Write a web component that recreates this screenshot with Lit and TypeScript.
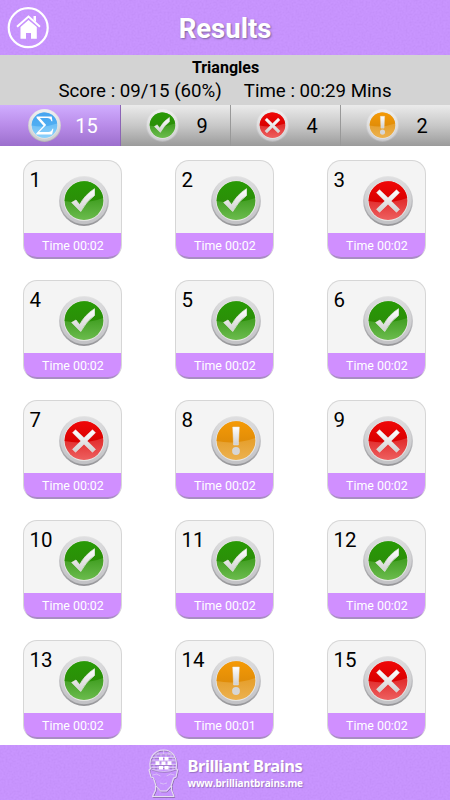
import { LitElement, html, css, svg } from "lit";
import { customElement, property } from "lit/decorators.js";
import { classMap } from "lit/directives/class-map.js";

type Kind = "all" | "right" | "wrong" | "skipped";

const tones: Record<Kind, string[]> = {
  all: ["#46a4f0", "#50aef2", "#6fc0f7", "#8fd2fb"],
  right: ["#289a06", "#2b8e08", "#45a126", "#6cbc4e"],
  wrong: ["#f00808", "#d80000", "#e23030", "#ee6060"],
  skipped: ["#f59a06", "#e08c08", "#e6a02e", "#ecb250"],
};

const glyphs: Record<Kind, unknown> = {
  all: svg`<path d="M13 11.500H36L37 18.500H35.500Q34 13.500 29 13.500H18L27.500 24.300L17 35H31Q35.500 35 37 30H38.500L36.500 38.500H12.500V37L23.500 25.500L13 13.500Z" fill="#fff"/>`,
  right: svg`<path d="M12.700 26.500L17 24L20.700 29Q25 19.500 35.500 12.700V19.500Q27 25.500 21.700 35.500Z" fill="url(#mark)" stroke="#e6e6e6" stroke-width=".8" stroke-linejoin="round"/>`,
  wrong: svg`<path d="M16.500 13.700L25 21.800L33.500 13.700L36.500 16.700L28.200 25L36.500 33.300L33.500 36.300L25 28.200L16.500 36.300L13.500 33.300L21.800 25L13.500 16.700Z" fill="url(#mark)" stroke="#e4e4e4" stroke-width=".6" stroke-linejoin="round"/>`,
  skipped: svg`<path d="M21.700 11H28.300L27.400 29H22.600Z" fill="url(#mark)" stroke="#e6e6e6" stroke-width=".5"/><circle cx="25" cy="35" r="3.900" fill="#d6d6d6"/>`,
};

@customElement("status-icon")
class StatusIcon extends LitElement {
  @property() kind: Kind = "right";
  static styles = css`
    :host { display: block; }
    svg { display: block; width: 100%; height: 100%; overflow: visible; }
    .rim-top { stop-color: var(--rim-top, #e4e4e4); }
    .rim-mid { stop-color: var(--rim-mid, #c0c0c3); }
    .rim-end { stop-color: var(--rim-end, #949497); }
    .ring-top { stop-color: var(--ring-top, #dedee0); }
    .ring-end { stop-color: var(--ring-end, #c2c2c5); }
  `;
  render() {
    const t = tones[this.kind];
    return html`<svg viewBox="0 0 50 50">
      <defs>
        <linearGradient id="rim" x1="0" y1="0" x2="0" y2="1">
          <stop class="rim-top" offset="0" /><stop class="rim-mid" offset=".5" /><stop class="rim-end" offset="1" />
        </linearGradient>
        <linearGradient id="ring" x1="0" y1="0" x2="0" y2="1">
          <stop class="ring-top" offset="0" /><stop class="ring-end" offset="1" />
        </linearGradient>
        <linearGradient id="top" x1="0" y1="0" x2="0" y2="1">
          <stop offset="0" stop-color=${t[0]} /><stop offset="1" stop-color=${t[1]} />
        </linearGradient>
        <linearGradient id="low" x1="0" y1="0" x2="0" y2="1">
          <stop offset=".5" stop-color=${t[2]} /><stop offset="1" stop-color=${t[3]} />
        </linearGradient>
        <linearGradient id="mark" x1="0" y1="0" x2="0" y2="1">
          <stop offset="0" stop-color="#fff" /><stop offset="1" stop-color="#d0d0d0" />
        </linearGradient>
      </defs>
      <circle cx="25" cy="25" r="24.900" fill="url(#rim)" />
      <circle cx="25" cy="24.600" r="23.600" fill="url(#ring)" />
      <circle cx="25" cy="24.700" r="20.300" fill="#e6e6e4" />
      <circle cx="25" cy="24.700" r="19.400" fill="url(#low)" />
      <path d="M5.600 25A19.400 19.400 0 0 1 44.200 22Q25 29 5.600 25Z" fill="url(#top)" />
      ${glyphs[this.kind]}
    </svg>`;
  }
}

@customElement("grain-layer")
class GrainLayer extends LitElement {
  static styles = css`
    :host { position: absolute; inset: 0; opacity: 0.05; }
    svg { display: block; width: 100%; height: 100%; }
  `;
  render() {
    return html`<svg>
      <filter id="grain" x="0" y="0" width="100%" height="100%"><feTurbulence type="fractalNoise" baseFrequency=".5" numOctaves="2" seed="4" /><feColorMatrix type="matrix" values="1.500 0 0 0 0  1.500 0 0 0 0  1.500 0 0 0 0  0 0 0 0 1" /></filter>
      <rect width="100%" height="100%" filter="url(#grain)" />
    </svg>`;
  }
}

@customElement("result-card")
class ResultCard extends LitElement {
  @property({ type: Number }) number = 1;
  @property() kind: Kind = "right";
  @property() time = "00:02";
  static styles = css`
    :host {
      display: flex; flex-direction: column; box-sizing: border-box; width: 99px; height: 99px;
      border: 1px solid #d6d6d6; border-bottom: 0; border-radius: 14px; overflow: hidden; background: #f4f4f4;
    }
    .body { display: flex; flex: 1; justify-content: space-between; padding: 7px 12.500px 0 5px; }
    .number { font-size: 20.500px; line-height: 24px; color: #000; }
    status-icon { width: 50px; height: 50px; margin-top: 8px; flex: none; }
    .time {
      height: 26px; box-sizing: border-box; margin: 0 -1px; border-bottom: 2px solid #a98cc4;
      border-radius: 0 0 14px 14px; background: #d08fff; color: #fff; font-size: 12.400px; line-height: 26px; text-align: center;
    }
  `;
  render() {
    return html`<div class="body"><span class="number">${this.number}</span><status-icon .kind=${this.kind}></status-icon></div>
      <div class="time">Time ${this.time}</div>`;
  }
}

@customElement("app-root")
class AppRoot extends LitElement {
  static styles = css`
    :host { display: flex; flex-direction: column; width: 450px; height: 800px; overflow: hidden; background: #fff; font-family: Roboto, sans-serif; color: #000; }
    header { position: relative; display: grid; grid-template-columns: 58px 1fr 58px; align-items: center; height: 55px; background: #c68fff; flex: none; }
    .home { width: 42px; height: 42px; margin-left: 7px; position: relative; }
    h1 { position: relative; margin: 0; padding-top: 2px; text-align: center; color: #fff; font-size: 27.500px; line-height: 34px; font-weight: 700; text-shadow: 1px 1px 2px #7b659a; }
    .summary { box-sizing: border-box; height: 50px; background: #d3d3d3; text-align: center; flex: none; }
    .topic { font-size: 16px; font-weight: 700; line-height: 25px; padding-left: 1px; }
    .score { display: flex; justify-content: center; gap: 22px; font-size: 18.700px; line-height: 23px; }
    nav {
      display: grid; grid-template-columns: 121px 110px 110px 109px; height: 41px; flex: none;
      --rim-top: #ececec; --rim-mid: #cfcfd0; --rim-end: #b4b4b6; --ring-top: #f0f0f0; --ring-end: #cdcdd0;
    }
    .tab { display: flex; align-items: center; box-sizing: border-box; padding-left: 25px; border-right: 1px solid #999; background: linear-gradient(#ebebeb, #c8c8c8 50%, #9b9b9b); font-size: 20px; }
    .tab:last-child { border: 0; }
    .tab status-icon { width: 33px; height: 33px; margin-top: -1px; }
    .tab .count { flex: 1; text-align: center; padding-right: 5px; }
    .tab.active { padding-left: 28px; color: #fff; background: linear-gradient(#d0adff, #b98ce9 50%, #9c6fcd); border-color: #8c65b5; }
    .tab.active .count { padding-right: 8px; }
    main { flex: 1; display: grid; grid-template-columns: repeat(3, 99px); grid-auto-rows: 99px; gap: 21px 53px; padding: 14px 0 0 23.400px; }
    footer { position: relative; display: flex; height: 55px; background: #c68fff; flex: none; color: #fff; font-family: "Open Sans", sans-serif; font-weight: 700; }
    .head { position: relative; width: 32px; height: 50px; margin: 3px 0 0 148px; overflow: visible; }
    .brand { position: relative; margin: 10px 0 0 7.500px; text-shadow: 1px 1px 1px #9871c4; white-space: nowrap; }
    .name { font-family: "Noto Sans", sans-serif; font-size: 16.500px; line-height: 22px; letter-spacing: -0.450px; }
    .site { font-size: 10px; line-height: 12px; letter-spacing: -0.150px; }
  `;
  private tabs: [Kind, number][] = [["all", 15], ["right", 9], ["wrong", 4], ["skipped", 2]];
  private results: Kind[] = [
    "right", "right", "wrong", "right", "right", "right", "wrong", "skipped", "wrong",
    "right", "right", "right", "right", "skipped", "wrong",
  ];
  render() {
    return html`
      <header>
        <grain-layer></grain-layer>
        <svg class="home" viewBox="0 0 42 42">
          <circle cx="21.200" cy="20.700" r="19.500" fill="none" stroke="#fff" stroke-width="2.200" />
          <path d="M10 19.700L21.500 9.500L33 19.700" fill="none" stroke="#fff" stroke-width="2" />
          <path d="M26.500 9H29V15L26.500 12.800ZM13.500 20L21.500 13L29.800 20V31.700H24V26H19V31.700H13.500Z" fill="#fff" />
        </svg>
        <h1>Results</h1>
      </header>
      <section class="summary">
        <div class="topic">Triangles</div>
        <div class="score"><span>Score : 09/15 (60%)</span><span>Time : 00:29 Mins</span></div>
      </section>
      <nav>
        ${this.tabs.map(([kind, count]) => html`<div class=${classMap({ tab: true, active: kind === "all" })}>
          <status-icon .kind=${kind}></status-icon><span class="count">${count}</span></div>`)}
      </nav>
      <main>
        ${this.results.map((kind, i) => html`<result-card .number=${i + 1} .kind=${kind} .time=${i === 13 ? "00:01" : "00:02"}></result-card>`)}
      </main>
      <footer>
        <grain-layer></grain-layer>
        <svg class="head" viewBox="0 0 32 50" fill="none" stroke-linejoin="round">
          <g stroke="#806a99" stroke-width="1" opacity=".8" transform="translate(.8 .9)">
            <path d="M2.500 21C0 10 6 2 15.500 2S30 10 28 21M2.500 20.500L1 22L3 29L5.500 30L8 38L12.500 43H18.500L23 38L25.500 30L28 29L29.500 22L28 20.500M7.500 38V42L4.500 48.500H26L23.500 42V38" />
            <path d="M3 21Q15.500 26 28 21M6 6H25M3.500 9.500H27M2.500 13H28M2.500 16.500H28M3 19.500H28" stroke-width=".7" />
          </g>
          <g stroke="#e6def0">
            <path d="M2.500 21C0 10 6 2 15.500 2S30 10 28 21M2.500 20.500L1 22L3 29L5.500 30L8 38L12.500 43H18.500L23 38L25.500 30L28 29L29.500 22L28 20.500M7.500 38V42L4.500 48.500H26L23.500 42V38" stroke-width="1.100" />
            <path d="M3 21Q15.500 26 28 21M6 6H25M3.500 9.500H27M2.500 13H28M2.500 16.500H28M3 19.500H28M10 4V7M15.500 2V6M21 4V7M8 6V9.500M13 6V9.500M18 6V9.500M23 6V9.500M6 9.500V13M25 9.500V13M6 16.500V22M10 18V23M21 18V23M25 16.500V22" stroke-width=".7" opacity=".8" />
            <path d="M4.500 27Q8.500 24.500 12.500 28M18.500 28Q22.500 24.500 26.500 27M12 35Q15.500 37 19 35" stroke-width=".8" opacity=".7" />
          </g>
          <path d="M11 9H15V12.500H11ZM16.500 9H20.500V12.500H16.500ZM7.500 13.300H11.500V17H7.500ZM13.500 13.500H17.500V17H13.500ZM19.500 13.300H23.500V17H19.500ZM11 18H15V21.500H11ZM16.500 18H20.500V21.500H16.500Z" fill="#fff" />
        </svg>
        <div class="brand"><div class="name">Brilliant Brains</div><div class="site">www.brilliantbrains.me</div></div>
      </footer>`;
  }
}
